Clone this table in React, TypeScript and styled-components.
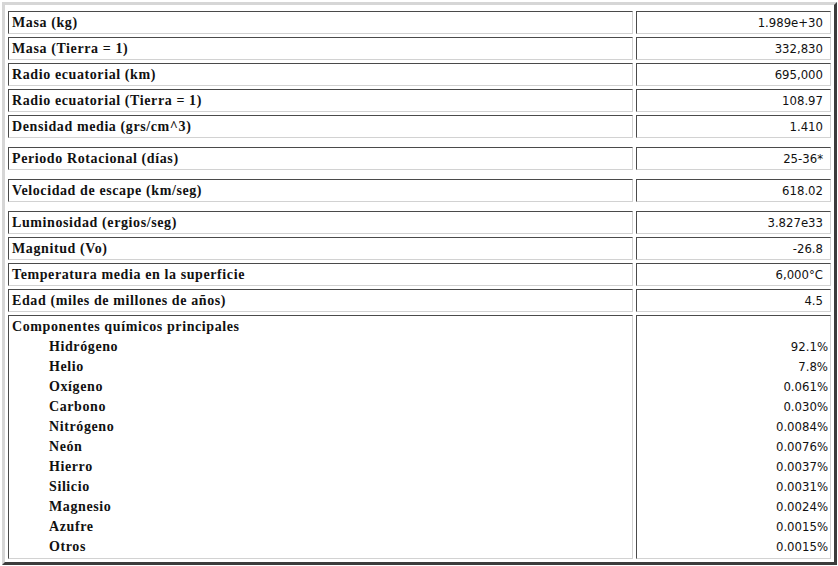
import React from "react";
import styled, { createGlobalStyle } from "styled-components";

const Global = createGlobalStyle`
  html, body { margin: 0; padding: 0; background: #ffffff; }
  body { width: 838px; height: 566px; overflow: hidden; }
`;

const Page = styled.div`
  padding: 2px 0 0 2px;
`;

const Table = styled.div`
  box-sizing: border-box;
  width: 835px;
  display: grid;
  grid-template-columns: 625px 195px;
  column-gap: 3px;
  row-gap: 3px;
  padding: 6px 3px 3px 3px;
  border: 3px solid;
  border-color: #d6d6d6 #3c3c3c #3c3c3c #d6d6d6;
  background: #ffffff;
`;

const Cell = styled.div<{ $right?: boolean; $gap?: boolean }>`
  box-sizing: border-box;
  border: 1px solid;
  border-color: #4a4a4a #d2d2d2 #d2d2d2 #4a4a4a;
  padding: 0 ${(p) => (p.$right ? "7px" : "3px")} 0 3px;
  margin-top: ${(p) => (p.$gap ? "6px" : "0")};
  line-height: 21px;
  min-height: 23px;
  color: #111;
  text-align: ${(p) => (p.$right ? "right" : "left")};
  font-family: ${(p) =>
    p.$right
      ? '"DejaVu Sans Condensed", "DejaVu Sans", sans-serif'
      : '"Liberation Serif", "Times New Roman", serif'};
  font-size: ${(p) => (p.$right ? "13px" : "14px")};
  font-weight: ${(p) => (p.$right ? 400 : 700)};
  letter-spacing: ${(p) => (p.$right ? "0" : "0.6px")};
  white-space: nowrap;
`;

const ListCell = styled(Cell)`
  padding-top: 1px;
  padding-bottom: 1px;
  padding-right: ${(p) => (p.$right ? "2px" : "3px")};
  line-height: 20px;
`;

const Line = styled.div<{ $indent?: boolean }>`
  height: 20px;
  padding-left: ${(p) => (p.$indent ? "37px" : "0")};
`;

const rows: { label: string; value: string; gap?: boolean }[] = [
  { label: "Masa (kg)", value: "1.989e+30" },
  { label: "Masa (Tierra = 1)", value: "332,830" },
  { label: "Radio ecuatorial (km)", value: "695,000" },
  { label: "Radio ecuatorial (Tierra = 1)", value: "108.97" },
  { label: "Densidad media (grs/cm^3)", value: "1.410" },
  { label: "Periodo Rotacional (días)", value: "25-36*", gap: true },
  { label: "Velocidad de escape (km/seg)", value: "618.02", gap: true },
  { label: "Luminosidad (ergios/seg)", value: "3.827e33", gap: true },
  { label: "Magnitud (Vo)", value: "-26.8" },
  { label: "Temperatura media en la superficie", value: "6,000°C" },
  { label: "Edad (miles de millones de años)", value: "4.5" },
];

const components: [string, string][] = [
  ["Hidrógeno", "92.1%"],
  ["Helio", "7.8%"],
  ["Oxígeno", "0.061%"],
  ["Carbono", "0.030%"],
  ["Nitrógeno", "0.0084%"],
  ["Neón", "0.0076%"],
  ["Hierro", "0.0037%"],
  ["Silicio", "0.0031%"],
  ["Magnesio", "0.0024%"],
  ["Azufre", "0.0015%"],
  ["Otros", "0.0015%"],
];

export default function App() {
  return (
    <Page>
      <Global />
      <Table>
        {rows.map((r) => (
          <React.Fragment key={r.label}>
            <Cell $gap={r.gap}>{r.label}</Cell>
            <Cell $right $gap={r.gap}>
              {r.value}
            </Cell>
          </React.Fragment>
        ))}
        <ListCell>
          <Line>Componentes químicos principales</Line>
          {components.map(([name]) => (
            <Line key={name} $indent>
              {name}
            </Line>
          ))}
        </ListCell>
        <ListCell $right>
          <Line />
          {components.map(([name, v]) => (
            <Line key={name}>{v}</Line>
          ))}
        </ListCell>
      </Table>
    </Page>
  );
}
